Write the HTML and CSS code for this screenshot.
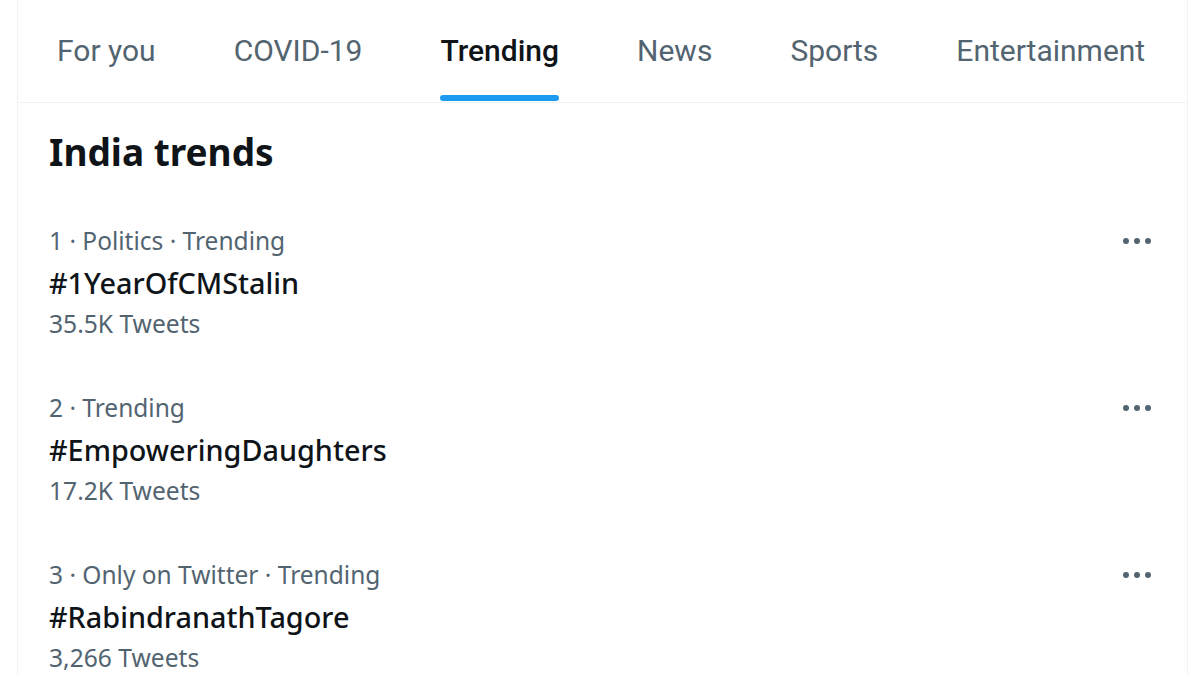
FILE: index.html
```html
<!DOCTYPE html>
<html>
<head>
<meta charset="utf-8">
<link rel="stylesheet" href="styles.css">
</head>
<body>
<div class="panel">
  <nav class="tabs">
    <div class="tab"><span class="tab-label">For you</span></div>
    <div class="tab"><span class="tab-label">COVID-19</span></div>
    <div class="tab active"><span class="tab-label">Trending</span></div>
    <div class="tab"><span class="tab-label">News</span></div>
    <div class="tab"><span class="tab-label">Sports</span></div>
    <div class="tab"><span class="tab-label">Entertainment</span></div>
  </nav>
  <h2 class="section-title">India trends</h2>
  <div class="trends">
    <div class="trend">
      <div class="trend-body">
        <div class="meta">1 · Politics · Trending</div>
        <div class="tag">#1YearOfCMStalin</div>
        <div class="count">35.5K Tweets</div>
      </div>
      <div class="more"><span></span><span></span><span></span></div>
    </div>
    <div class="trend">
      <div class="trend-body">
        <div class="meta">2 · Trending</div>
        <div class="tag">#EmpoweringDaughters</div>
        <div class="count">17.2K Tweets</div>
      </div>
      <div class="more"><span></span><span></span><span></span></div>
    </div>
    <div class="trend">
      <div class="trend-body">
        <div class="meta">3 · Only on Twitter · Trending</div>
        <div class="tag">#RabindranathTagore</div>
        <div class="count">3,266 Tweets</div>
      </div>
      <div class="more"><span></span><span></span><span></span></div>
    </div>
  </div>
</div>
</body>
</html>
```
FILE: styles.css
```css
html, body {
  margin: 0;
  padding: 0;
  background: #ffffff;
}
body {
  font-family: "Noto Sans", "Open Sans", sans-serif;
  color: #0f1419;
  overflow: hidden;
}
.panel {
  margin-left: 17px;
  width: 1169px;
  height: 674px;
  border-left: 1px solid #eff3f4;
  border-right: 1px solid #eff3f4;
}
.tabs {
  display: flex;
  height: 102px;
  border-bottom: 1px solid #eff3f4;
}
.tab {
  padding: 0 39px;
  display: flex;
  align-items: stretch;
}
.tab-label {
  font-family: Roboto, "Liberation Sans", sans-serif;
  font-size: 30px;
  color: #536471;
  display: flex;
  align-items: center;
  position: relative;
  padding-bottom: 2px;
}
.tab.active .tab-label {
  color: #0f1419;
  font-weight: 500;
}
.tab.active .tab-label::after {
  content: "";
  position: absolute;
  left: 0;
  right: 0;
  bottom: 1px;
  height: 6px;
  border-radius: 3px;
  background: #1d9bf0;
}
.section-title {
  margin: 0;
  padding: 27px 31px 0;
  font-size: 37px;
  font-weight: 700;
  line-height: 44px;
}
.trends {
  padding-top: 46px;
  display: flex;
  flex-direction: column;
  gap: 50px;
}
.trend {
  display: flex;
  justify-content: space-between;
  padding: 0 32px 0 31px;
}
.meta {
  font-size: 24.5px;
  line-height: 42px;
  color: #536471;
}
.count {
  font-size: 24.6px;
  line-height: 26px;
  padding-top: 7px;
  color: #536471;
}
.tag {
  font-size: 28.8px;
  font-weight: 500;
  line-height: 42px;
}
.more {
  display: flex;
  gap: 5px;
  padding-top: 18px;
  padding-right: 4px;
}
.more span {
  width: 6px;
  height: 6px;
  border-radius: 50%;
  background: #536471;
}
```
